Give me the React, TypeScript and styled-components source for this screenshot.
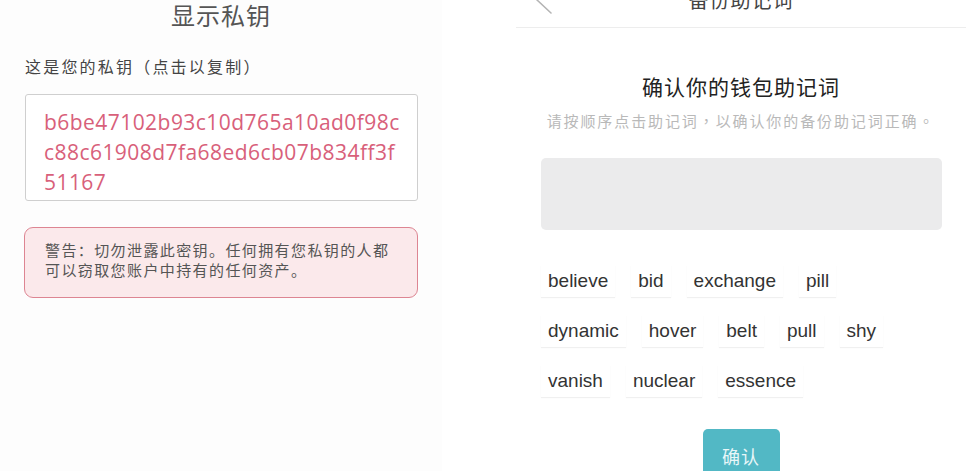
import React from "react";
import styled, { createGlobalStyle } from "styled-components";

const GlobalStyle = createGlobalStyle`
  html, body {
    margin: 0;
    padding: 0;
    background: #ffffff;
    overflow: hidden;
  }
  * { box-sizing: border-box; }
`;

const CJK = `"Noto Sans CJK SC", "Noto Sans", sans-serif`;
const CJK_TC = `"Noto Sans CJK TC", "Noto Sans CJK SC", sans-serif`;

const Stage = styled.div`
  display: flex;
  align-items: flex-start;
  width: 972px;
  height: 471px;
  overflow: hidden;
  background: #ffffff;
`;

/* ---------- Left screen: show private key ---------- */

const KeyScreen = styled.section`
  width: 442px;
  height: 100%;
  flex: none;
  display: flex;
  flex-direction: column;
  padding: 0 24px;
  background: #fdfdfd;
  font-family: ${CJK};

  & > * { flex: none; }
`;

const ScreenTitle = styled.h1`
  margin: 0;
  font-size: 24px;
  line-height: 30px;
  font-weight: 400;
  letter-spacing: 1px;
  color: #555555;
  text-align: center;
`;

const FieldLabel = styled.p`
  margin: 24px 0 0 1px;
  font-size: 16px;
  line-height: 24px;
  letter-spacing: 2.2px;
  color: #444444;
`;

const KeyBox = styled.div`
  margin: 16px 0 0 1px;
  border: 1px solid #cfcfcf;
  border-radius: 3px;
  background: #ffffff;
  padding: 12px 2px 3px 18px;
  cursor: pointer;
`;

const KeyLine = styled.span`
  display: block;
  font-family: "Open Sans", "Noto Sans", sans-serif;
  font-size: 21px;
  line-height: 30px;
  letter-spacing: 0.45px;
  color: #d8607a;
  white-space: nowrap;
`;

const WarningBox = styled.div`
  margin-top: 26px;
  border: 1.5px solid #dd8592;
  border-radius: 9px;
  background: #fbe9eb;
  padding: 12px 20px 17px 20px;
  font-size: 15px;
  line-height: 20px;
  letter-spacing: 1.4px;
  color: #555555;
`;

/* ---------- Right screen: confirm mnemonic ---------- */

const MnemonicScreen = styled.section`
  width: 450px;
  flex: none;
  margin-left: 74px;
  display: flex;
  flex-direction: column;
  font-family: ${CJK};

  & > * { flex: none; }
`;

const NavBar = styled.header`
  height: 28px;
  display: grid;
  grid-template-columns: 1fr auto 1fr;
  align-items: start;
  border-bottom: 1px solid #ededed;
`;

const BackButton = styled.button`
  justify-self: start;
  margin: -14px 0 0 19px;
  padding: 0;
  border: none;
  background: none;
  display: flex;
  cursor: pointer;
`;

const NavTitle = styled.div`
  margin-top: -10px;
  font-size: 20px;
  line-height: 20px;
  letter-spacing: 1px;
  color: #444444;
`;

const Heading = styled.h2`
  margin: 44px 0 0;
  font-size: 21px;
  line-height: 28px;
  font-weight: 400;
  letter-spacing: 1px;
  color: #222222;
  text-align: center;
`;

const Hint = styled.p`
  margin: 11px 0 0;
  font-family: ${CJK_TC};
  font-size: 15px;
  line-height: 20px;
  letter-spacing: 1.9px;
  color: #b9b9b9;
  text-align: center;
`;

const AnswerArea = styled.div`
  margin: 27px 24px 0 25px;
  height: 72px;
  border-radius: 5px;
  background: #ebebec;
`;

const WordList = styled.div`
  margin: 35px 0 0 25px;
  max-width: 380px;
  display: flex;
  flex-wrap: wrap;
  column-gap: 16px;
  row-gap: 18px;
`;

const WordChip = styled.button`
  height: 32px;
  padding: 0 7px;
  border: none;
  background: #ffffff;
  box-shadow: 0 1px 1px rgba(0, 0, 0, 0.06);
  font-family: "Liberation Sans", Arial, sans-serif;
  font-size: 19px;
  color: #333333;
  display: flex;
  align-items: center;
  cursor: pointer;
`;

const ConfirmButton = styled.button`
  align-self: center;
  margin-top: 32px;
  width: 77px;
  height: 54px;
  border: none;
  border-radius: 5px;
  background: #52b8c5;
  color: #e8f6f8;
  font-family: ${CJK};
  font-size: 18px;
  letter-spacing: 1px;
  display: flex;
  align-items: center;
  justify-content: center;
  cursor: pointer;
`;

const privateKeyLines = [
  "b6be47102b93c10d765a10ad0f98c",
  "c88c61908d7fa68ed6cb07b834ff3f",
  "51167",
];

const words = [
  "believe",
  "bid",
  "exchange",
  "pill",
  "dynamic",
  "hover",
  "belt",
  "pull",
  "shy",
  "vanish",
  "nuclear",
  "essence",
];

export default function App() {
  return (
    <>
      <GlobalStyle />
      <Stage>
        <KeyScreen>
          <ScreenTitle>显示私钥</ScreenTitle>
          <FieldLabel>这是您的私钥（点击以复制）</FieldLabel>
          <KeyBox>
            {privateKeyLines.map((line) => (
              <KeyLine key={line}>{line}</KeyLine>
            ))}
          </KeyBox>
          <WarningBox>
            警告：切勿泄露此密钥。任何拥有您私钥的人都可以窃取您账户中持有的任何资产。
          </WarningBox>
        </KeyScreen>

        <MnemonicScreen>
          <NavBar>
            <BackButton aria-label="返回">
              <svg width="18" height="28" viewBox="0 0 18 28">
                <polyline
                  points="16,1 2,14 16,27"
                  fill="none"
                  stroke="#b4b4b4"
                  strokeWidth="1.6"
                  strokeLinecap="round"
                  strokeLinejoin="round"
                />
              </svg>
            </BackButton>
            <NavTitle>备份助记词</NavTitle>
            <span />
          </NavBar>
          <Heading>确认你的钱包助记词</Heading>
          <Hint>请按顺序点击助记词，以确认你的备份助记词正确。</Hint>
          <AnswerArea />
          <WordList>
            {words.map((w) => (
              <WordChip key={w}>{w}</WordChip>
            ))}
          </WordList>
          <ConfirmButton>确认</ConfirmButton>
        </MnemonicScreen>
      </Stage>
    </>
  );
}
